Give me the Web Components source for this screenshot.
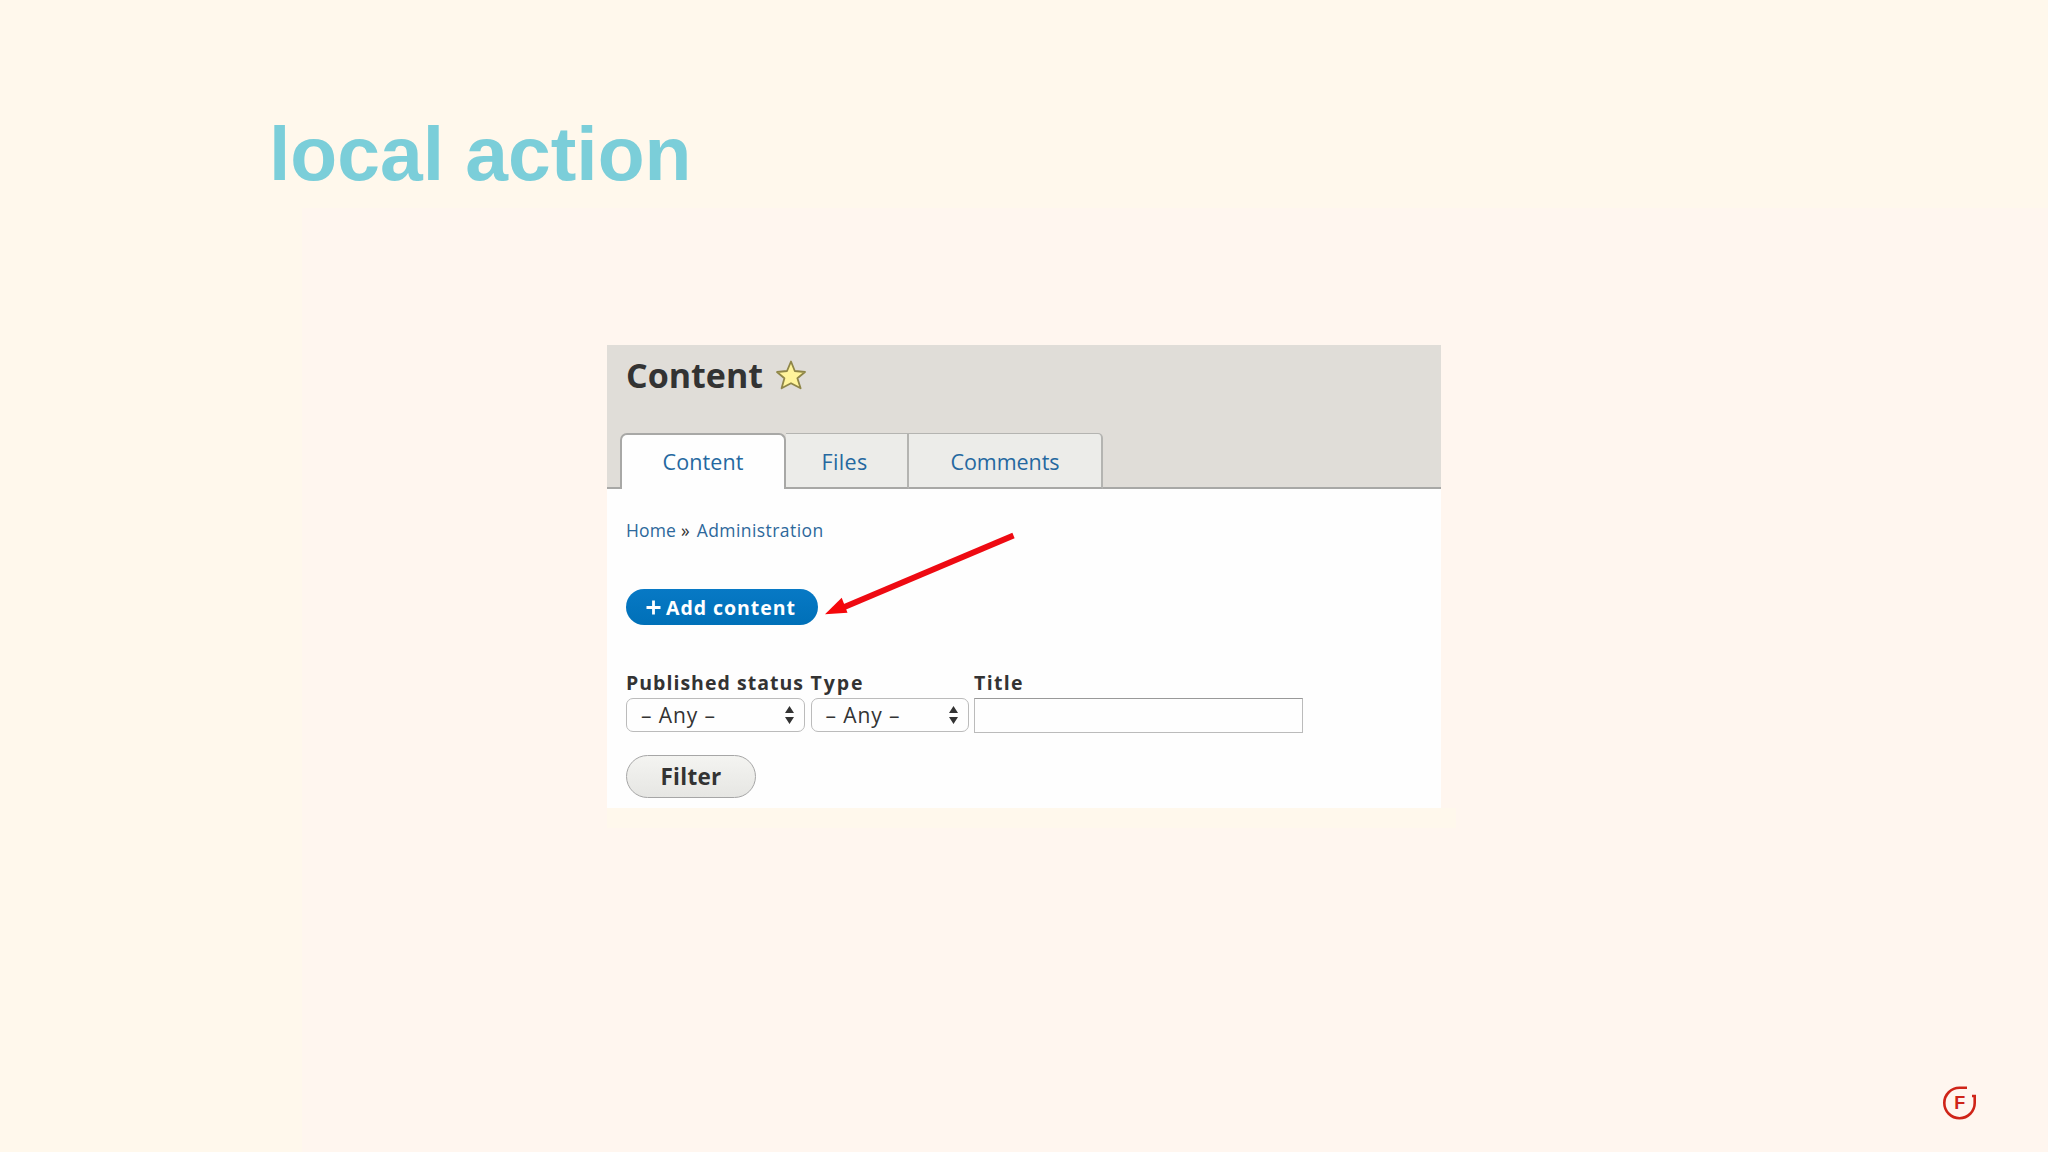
<!DOCTYPE html>
<html lang="en">
<head>
<meta charset="utf-8">
<title>local action</title>
<style>
    body {
        margin: 0;
        background: #fff8ec;
    }
</style>
</head>
<body>
<slide-page heading="local action">
    <admin-panel heading="Content">
        <admin-tab slot="tabs" active style="width: 166px"><fit-text width="81">Content</fit-text></admin-tab>
        <admin-tab slot="tabs" style="width: 123px; padding-right: 4px"><fit-text width="46">Files</fit-text></admin-tab>
        <admin-tab slot="tabs" last style="width: 194px"><fit-text width="109">Comments</fit-text></admin-tab>

        <bread-crumb></bread-crumb>
        <action-button></action-button>
        <filter-form></filter-form>
        <pointer-arrow slot="overlay"></pointer-arrow>
    </admin-panel>
</slide-page>

<script>
// Text set to a fixed measure by spreading the difference over its letters
class FitText extends HTMLElement {

    constructor () {
        super()
        this.root = this.attachShadow({mode: "open"})
        this.root.innerHTML =
        `
        <style>
            :host {
                display: inline-block;
                white-space: nowrap;
            }
        </style>
        <span><slot></slot></span>
        `
    }

    connectedCallback () {
        const span = this.root.querySelector("span")
        const target = Number(this.getAttribute("width"))
        const gap = (target - span.getBoundingClientRect().width) / this.textContent.length
        span.style.letterSpacing = gap.toFixed(3) + "px"
    }
}

class SlidePage extends HTMLElement {

    constructor () {
        super()
        this.root = this.attachShadow({mode: "open"})
    }

    connectedCallback () {
        this.root.innerHTML =
        `
        <style>
            :host {
                display: flex;
                flex-direction: column;
                box-sizing: border-box;
                width: 2048px;
                height: 1152px;
                padding-top: 109px;
                overflow: hidden;
                background:
                    linear-gradient(#fff8ec, #fff8ec) 607px 808px / 849px 20px no-repeat,
                    linear-gradient(#fff6ef, #fff6ef) 302px 208px no-repeat,
                    #fff8ec;
            }

            h1 {
                margin: 0 0 148px 269px;
                font: bold 76.8px/88px "Liberation Sans", Arial, sans-serif;
                color: #7bced9;
            }

            .stage {
                flex: 1;
                padding-left: 607px;
            }

            footer {
                display: flex;
                justify-content: flex-end;
                padding: 0 69px 30px 0;
            }
        </style>
        <h1>${this.getAttribute("heading")}</h1>
        <div class="stage"><slot></slot></div>
        <footer><corner-logo></corner-logo></footer>
        `
    }
}

class AdminPanel extends HTMLElement {

    constructor () {
        super()
        this.root = this.attachShadow({mode: "open"})
    }

    connectedCallback () {
        this.root.innerHTML =
        `
        <style>
            :host {
                display: block;
                position: relative;
                width: 834px;
                height: 463px;
                background: #fefefe;
                font-family: "Lucida Grande", "Open Sans", sans-serif;
                color: #333;
            }

            header {
                display: flex;
                flex-direction: column;
                justify-content: space-between;
                box-sizing: border-box;
                height: 144px;
                background:
                    linear-gradient(#a8a8a6, #a8a8a6) 0 142px / 100% 2px no-repeat,
                    #e0ddd8;
            }

            .title {
                display: flex;
                align-items: center;
                gap: 12px;
                padding: 10px 0 0 19px;
            }

            h2 {
                margin: 0;
                font-size: 34px;
                font-weight: 700;
                line-height: 40px;
            }

            svg {
                display: block;
            }

            nav {
                display: flex;
                padding-left: 13px;
            }
        </style>
        <header>
            <div class="title">
                <h2><fit-text width="137">${this.getAttribute("heading")}</fit-text></h2>
                <svg width="32" height="32" viewBox="0 0 32 32">
                    <path d="M16 2.5 L19.8 12 L30 13 L22.4 19.3 L25.6 29.3 L16 24.2 L6.6 29.3 L9.4 19.3 L2 13 L12 12 Z"
                        fill="#fff49b" stroke="#8f8648" stroke-width="1.8" stroke-linejoin="round"/>
                </svg>
            </div>
            <nav><slot name="tabs"></slot></nav>
        </header>
        <slot></slot>
        <slot name="overlay"></slot>
        `
    }
}

class AdminTab extends HTMLElement {

    constructor () {
        super()
        this.root = this.attachShadow({mode: "open"})
        this.root.innerHTML =
        `
        <style>
            :host {
                display: flex;
                justify-content: center;
                box-sizing: border-box;
                height: 56px;
                padding-top: 12px;
                border: solid #b4b4b1;
                border-width: 1px 2px 2px 0;
                border-bottom-color: #a8a8a6;
                background: #ecece9;
                font-size: 21.5px;
                font-weight: 500;
                line-height: 32px;
                color: #2568a0;
            }

            :host([active]) {
                padding-top: 11px;
                border: 2px solid #a8a8a6;
                border-bottom: 0;
                border-radius: 7px 7px 0 0;
                background: #fefefe;
            }

            :host([last]) {
                border-top-right-radius: 5px;
            }
        </style>
        <slot></slot>
        `
    }
}

class BreadCrumb extends HTMLElement {

    constructor () {
        super()
        this.root = this.attachShadow({mode: "open"})
        this.root.innerHTML =
        `
        <style>
            :host {
                display: flex;
                padding: 28px 0 1px 19px;
                font-size: 17.5px;
                font-weight: 500;
                line-height: 26px;
            }

            a {
                color: #2d689b;
            }

            .sep {
                margin: 0 7px 0 5px;
            }
        </style>
        <a><fit-text width="50">Home</fit-text></a>
        <span class="sep">»</span>
        <a><fit-text width="127">Administration</fit-text></a>
        `
    }
}

class ActionButton extends HTMLElement {

    constructor () {
        super()
        this.root = this.attachShadow({mode: "open"})
        this.root.innerHTML =
        `
        <style>
            :host {
                display: block;
                padding: 45px 0 0 19px;
            }

            button {
                display: flex;
                align-items: center;
                gap: 5px;
                width: 192px;
                height: 36px;
                padding: 0 0 0 20px;
                border: 0;
                border-radius: 18px;
                background: linear-gradient(#0779c5, #0070b8);
                font: bold 19.5px/36px "Lucida Grande", "Open Sans", sans-serif;
                color: #fff;
            }

            fit-text {
                padding-top: 1px;
            }
        </style>
        <button type="button">
            <svg width="15" height="15" viewBox="0 0 15 15">
                <path d="M7.5 0.5 V14.5 M0.5 7.5 H14.5" stroke="#fff" stroke-width="2.8"/>
            </svg>
            <fit-text width="130">Add content</fit-text>
        </button>
        `
    }
}

class SelectBox extends HTMLElement {

    constructor () {
        super()
        this.root = this.attachShadow({mode: "open"})
        this.root.innerHTML =
        `
        <style>
            :host {
                display: flex;
                align-items: center;
                justify-content: space-between;
                box-sizing: border-box;
                height: 34px;
                padding: 0 9px 0 14px;
                border: 1.5px solid #bbb;
                border-radius: 7px;
                background: #fefefe;
                font-size: 21px;
                line-height: 30px;
            }
        </style>
        <fit-text width="75">– Any –</fit-text>
        <svg width="11" height="20" viewBox="0 0 11 20">
            <path d="M5.5 1 L10 8 H1 Z M5.5 19 L10 12 H1 Z" fill="#333"/>
        </svg>
        `
    }
}

class FilterForm extends HTMLElement {

    constructor () {
        super()
        this.root = this.attachShadow({mode: "open"})
        this.root.innerHTML =
        `
        <style>
            :host {
                display: block;
                padding: 45px 0 0 19px;
            }

            .row {
                display: flex;
                gap: 5.5px;
            }

            label {
                display: block;
                height: 28px;
                font-size: 19.5px;
                font-weight: bold;
                line-height: 26px;
            }

            input {
                display: block;
                box-sizing: border-box;
                width: 329px;
                height: 35px;
                border: 1.5px solid #bbb;
                border-top-color: #999;
                background: #fefefe;
            }

            button {
                display: block;
                width: 130px;
                height: 43px;
                margin-top: 22px;
                padding: 0;
                border: 1.5px solid #a6a6a6;
                border-radius: 22px;
                background: linear-gradient(#f4f4f1, #e6e6e3);
                font: 700 22.5px/41px "Lucida Grande", "Open Sans", sans-serif;
                color: #333;
            }
        </style>
        <div class="row">
            <div>
                <label><fit-text width="178">Published status</fit-text></label>
                <select-box style="width: 179px"></select-box>
            </div>
            <div>
                <label><fit-text width="54">Type</fit-text></label>
                <select-box style="width: 158px"></select-box>
            </div>
            <div>
                <label><fit-text width="50">Title</fit-text></label>
                <input type="text">
            </div>
        </div>
        <button type="button"><fit-text width="61">Filter</fit-text></button>
        `
    }
}

// Red arrow laid over the panel, pointing at the action button
class PointerArrow extends HTMLElement {

    constructor () {
        super()
        this.root = this.attachShadow({mode: "open"})
        this.root.innerHTML =
        `
        <style>
            :host {
                display: block;
                position: absolute;
                left: 213px;
                top: 180px;
            }

            svg {
                display: block;
            }
        </style>
        <svg width="200" height="100" viewBox="0 0 200 100">
            <path d="M193.5 10.5 L22 83" stroke="#ee0a12" stroke-width="5.8"/>
            <path d="M5 89.3 L21.7 72.7 L27.5 87.8 Z" fill="#f5070b"/>
        </svg>
        `
    }
}

class CornerLogo extends HTMLElement {

    constructor () {
        super()
        this.root = this.attachShadow({mode: "open"})
        this.root.innerHTML =
        `
        <style>
            :host {
                display: block;
            }

            svg {
                display: block;
            }
        </style>
        <svg width="38" height="38" viewBox="0 0 38 38">
            <path d="M26 3.8 H18.5 A15.2 15.2 0 1 0 33.7 19 V12 H31" fill="none" stroke="#cf2418" stroke-width="2.6"/>
            <text x="13.2" y="25.2" fill="#cf2418" font-family="Liberation Sans, Arial, sans-serif" font-size="18" font-weight="bold">F</text>
        </svg>
        `
    }
}

customElements.define("corner-logo", CornerLogo)
customElements.define("slide-page", SlidePage)
customElements.define("admin-panel", AdminPanel)
customElements.define("admin-tab", AdminTab)
customElements.define("bread-crumb", BreadCrumb)
customElements.define("action-button", ActionButton)
customElements.define("select-box", SelectBox)
customElements.define("filter-form", FilterForm)
customElements.define("pointer-arrow", PointerArrow)
// last, so that it measures with the fonts of its hosts in place
customElements.define("fit-text", FitText)
</script>
</body>
</html>
